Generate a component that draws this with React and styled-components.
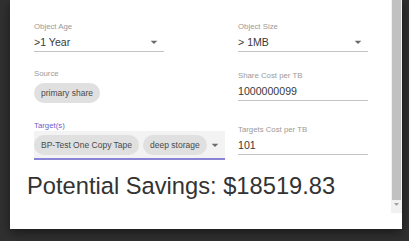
import styled, { createGlobalStyle } from 'styled-components';

const GlobalStyle = createGlobalStyle`
  html, body {
    margin: 0;
    padding: 0;
    background: #303030;
    font-family: "Liberation Sans", Arial, sans-serif;
  }
`;

const Page = styled.div`
  height: 241px;
  padding-left: 10px;
  display: flex;
  align-items: flex-start;
  overflow: hidden;
`;

const Dialog = styled.div`
  width: 392px;
  height: 229px;
  background: #fff;
  display: flex;
  flex-direction: column;
  box-shadow: 0 4px 10px rgba(0, 0, 0, 0.45);
`;

const Body = styled.div`
  height: 213px;
  display: flex;
`;

const Content = styled.div`
  flex: 1;
  padding-left: 17px;
`;

const Grid = styled.div`
  display: grid;
  grid-template-columns: 130px 130px;
  column-gap: 74px;
  padding-left: 7px;
  align-items: start;
`;

const Column = styled.div`
  display: flex;
  flex-direction: column;
`;

const Field = styled.div`
  margin-top: ${(p) => p.$top}px;
  display: flex;
  flex-direction: column;
`;

const Label = styled.div`
  font-size: 7.8px;
  line-height: 10px;
  color: ${(p) => (p.$focused ? '#6c63c8' : '#9a9a9a')};
  white-space: nowrap;
`;

const Input = styled.div`
  margin-top: 2px;
  height: 17px;
  line-height: 16px;
  font-size: 10.6px;
  color: #3a3a3a;
  border-bottom: 1px solid #c4c4c4;
  display: flex;
  align-items: flex-start;
  justify-content: space-between;
  white-space: nowrap;
`;

const Arrow = styled.svg`
  width: 16px;
  height: 16px;
  fill: #6b6b6b;
  margin-right: 2px;
  flex: none;
`;

const ChipRow = styled.div`
  display: flex;
  gap: 4px;
  margin-top: ${(p) => p.$gap || 0}px;
`;

const Chip = styled.span`
  height: 20px;
  line-height: 20px;
  padding: 0 7px;
  border-radius: 10px;
  background: #e0e0e0;
  color: #4a4a4a;
  font-size: 8.5px;
  white-space: nowrap;
`;

const MultiSelect = styled.div`
  width: max-content;
  padding: 4px 0 3px;
  background: #f3f3f3;
  border-bottom: 2px solid #8a84d6;
  display: flex;
  align-items: center;
`;

const Savings = styled.div`
  margin-top: 13px;
  font-size: 23.7px;
  line-height: 26px;
  color: #333;
`;

const Scrollbar = styled.div`
  width: 11px;
  background: #f1f1f1;
  display: flex;
  flex-direction: column;
  padding: 0 1px;
  box-sizing: border-box;
`;

const Thumb = styled.div`
  flex: 1;
  background: #c1c1c1;
  margin-bottom: 3px;
`;

const ScrollButton = styled.div`
  height: 10px;
  display: flex;
  align-items: flex-start;
  justify-content: center;
  svg {
    width: 5px;
    height: 3px;
    fill: #a3a3a3;
  }
`;

function DropArrow() {
  return (
    <Arrow viewBox="0 0 24 24">
      <path d="M7 10l5 5 5-5z" />
    </Arrow>
  );
}

export default function App() {
  return (
    <>
      <GlobalStyle />
      <Page>
        <Dialog>
          <Body>
            <Content>
              <Grid>
                <Column>
                  <Field $top={22}>
                    <Label>Object Age</Label>
                    <Input>
                      &gt;1 Year
                      <DropArrow />
                    </Input>
                  </Field>
                  <Field $top={17}>
                    <Label>Source</Label>
                    <ChipRow $gap={4}>
                      <Chip>primary share</Chip>
                    </ChipRow>
                  </Field>
                  <Field $top={18}>
                    <Label $focused>Target(s)</Label>
                    <MultiSelect>
                      <ChipRow>
                        <Chip>BP-Test One Copy Tape</Chip>
                        <Chip>deep storage</Chip>
                      </ChipRow>
                      <DropArrow />
                    </MultiSelect>
                  </Field>
                </Column>
                <Column>
                  <Field $top={22}>
                    <Label>Object Size</Label>
                    <Input>
                      &gt; 1MB
                      <DropArrow />
                    </Input>
                  </Field>
                  <Field $top={19}>
                    <Label>Share Cost per TB</Label>
                    <Input>1000000099</Input>
                  </Field>
                  <Field $top={24}>
                    <Label>Targets Cost per TB</Label>
                    <Input>101</Input>
                  </Field>
                </Column>
              </Grid>
              <Savings>Potential Savings: $18519.83</Savings>
            </Content>
            <Scrollbar>
              <Thumb />
              <ScrollButton>
                <svg viewBox="0 0 10 6">
                  <path d="M0 0h10L5 6z" />
                </svg>
              </ScrollButton>
            </Scrollbar>
          </Body>
        </Dialog>
      </Page>
    </>
  );
}
